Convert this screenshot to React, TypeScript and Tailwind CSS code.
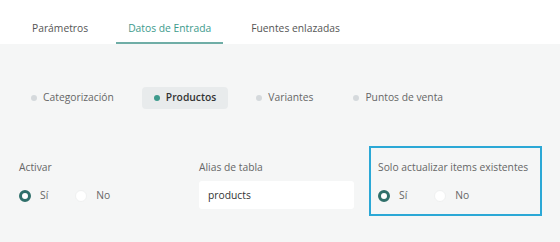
import React from "react";

const Radio = ({ checked }: { checked?: boolean }) =>
  checked ? (
    <span className="box-border inline-block h-[12px] w-[12px] rounded-full border-[3px] border-[#2f6f6a] bg-white" />
  ) : (
    <span className="box-border inline-block h-[12px] w-[12px] rounded-full border border-[#f0f1f1] bg-white" />
  );

const RadioGroup = () => (
  <div className="flex items-center text-[10.3px] text-[#666]">
    <Radio checked />
    <span className="ml-[9px]">Sí</span>
    <span className="ml-[27px] flex"><Radio /></span>
    <span className="ml-[9px]">No</span>
  </div>
);

export default function App() {
  const tabs = ["Parámetros", "Datos de Entrada", "Fuentes enlazadas"];
  const steps = ["Categorización", "Productos", "Variantes", "Puntos de venta"];
  return (
    <div className="h-[242px] w-[560px] overflow-hidden bg-[#f5f6f6]" style={{ fontFamily: '"Open Sans", sans-serif' }}>
      <div className="flex h-[44px] items-end gap-4 bg-white pl-[20px]">
        {tabs.map((t, i) => (
          <div
            key={t}
            className={
              "flex h-[32px] items-start px-3 pt-[9px] text-[10.3px] " +
              (i === 1 ? "border-b-2 border-[#6fada6] text-[#3d9a8c]" : "border-b-2 border-transparent text-[#555]")
            }
          >
            {t}
          </div>
        ))}
      </div>
      <div className="flex gap-4 pl-[19px] pt-[43px]">
        {steps.map((s, i) => (
          <div
            key={s}
            className={
              "flex h-[22px] items-center gap-[6px] rounded px-3 text-[10.3px] " +
              (i === 1 ? "bg-[#e8ebec] font-semibold text-[#333]" : "text-[#666]")
            }
          >
            <span className={"h-[6px] w-[6px] rounded-full " + (i === 1 ? "bg-[#3d9a8c]" : "bg-[#d5d9dc]")} />
            {s}
          </div>
        ))}
      </div>
      <div className="flex pl-[19px] pt-[37px]">
        <div className="w-[180px] pt-[14px]">
          <div className="text-[10.3px] text-[#666]">Activar</div>
          <div className="mt-[13px]">
            <RadioGroup />
          </div>
        </div>
        <div className="w-[170px] pt-[14px]">
          <div className="text-[10.3px] text-[#666]">Alias de tabla</div>
          <div className="mt-[6px] flex h-[28px] w-[155px] items-center rounded-[3px] bg-white px-[9px] text-[10.3px] text-[#333]">
            products
          </div>
        </div>
        <div className="h-[70px] w-[173px] border-2 border-[#2ba8d6] pl-[7px] pt-[12px]">
          <div className="text-[10.3px] text-[#666]">Solo actualizar items existentes</div>
          <div className="mt-[13px]">
            <RadioGroup />
          </div>
        </div>
      </div>
    </div>
  );
}
